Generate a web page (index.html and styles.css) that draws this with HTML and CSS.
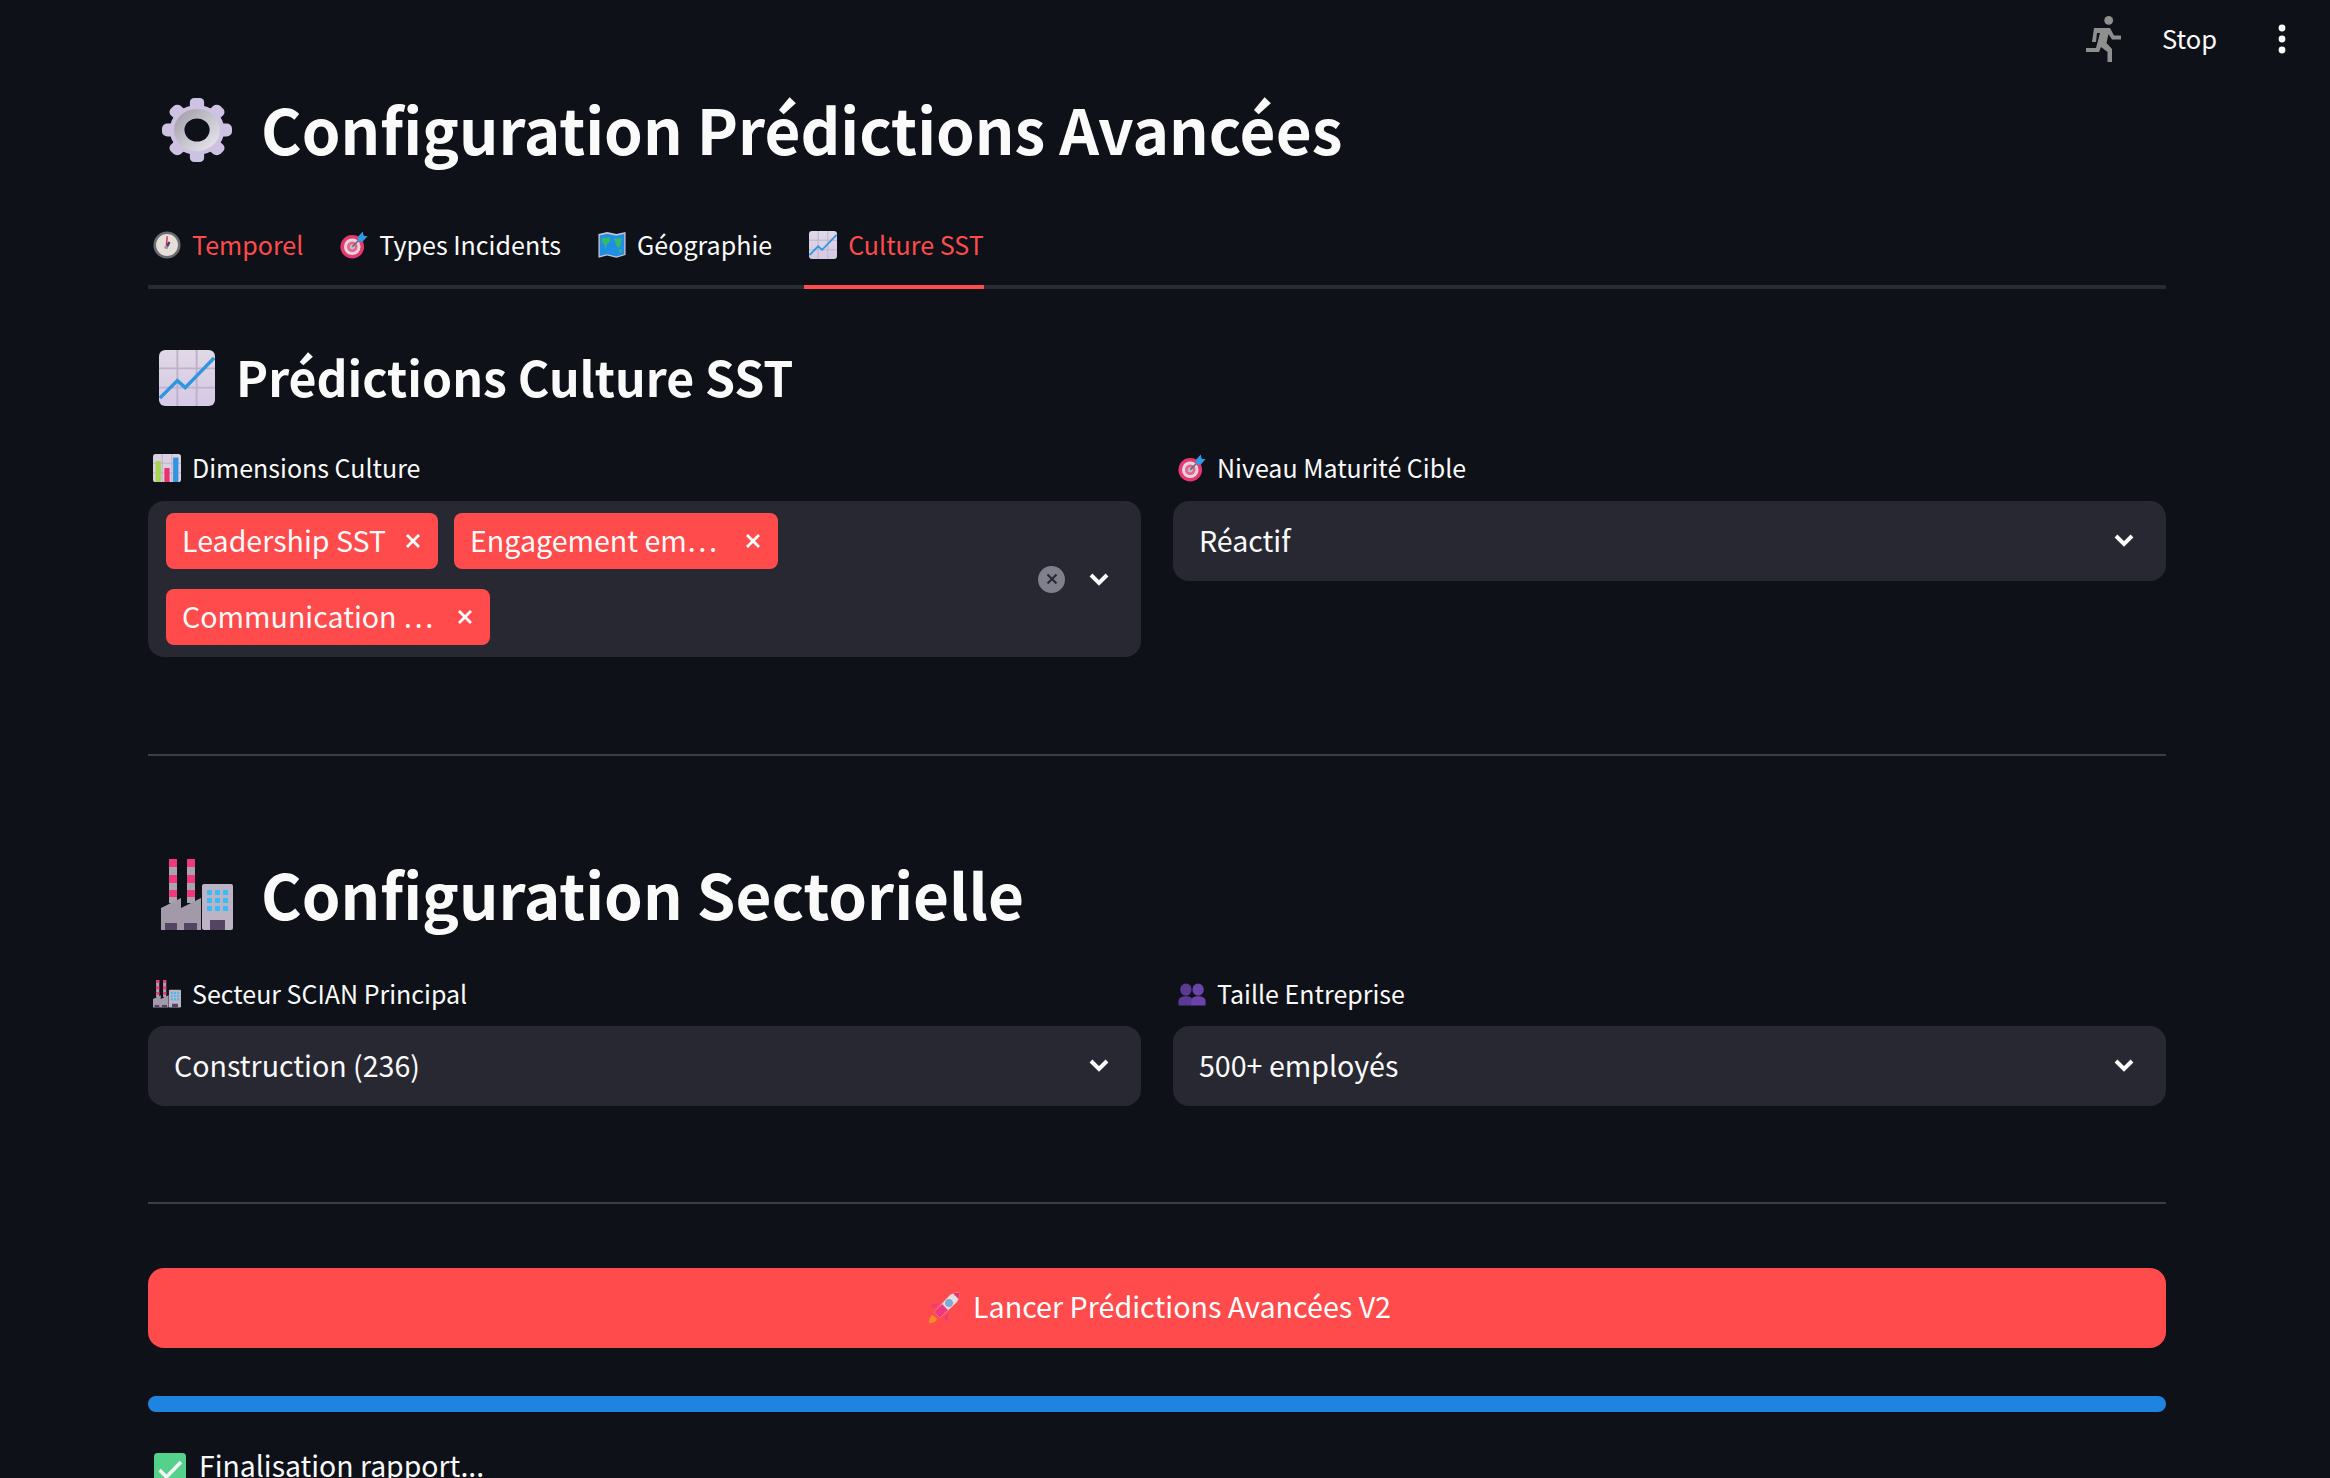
FILE: index.html
```html
<!DOCTYPE html>
<html lang="fr">

<head>
    <meta charset="UTF-8">
    <meta name="viewport" content="width=device-width, initial-scale=1.0">
    <title>Configuration Prédictions Avancées</title>
    <link rel="stylesheet" href="styles.css">
</head>

<body>
    <!-- emojis utilises partout sur la page -->
    <svg class="defs" xmlns="http://www.w3.org/2000/svg">
        <defs>
            <linearGradient id="ringGrad" x1="0" y1="0" x2="1" y2="1">
                <stop offset="0" stop-color="#a5a2ac" />
                <stop offset="1" stop-color="#e6e4ea" />
            </linearGradient>
            <linearGradient id="tileGrad" x1="0" y1="0" x2="0" y2="1">
                <stop offset="0" stop-color="#e0d9e6" />
                <stop offset="1" stop-color="#d5c9e4" />
            </linearGradient>
        </defs>
        <symbol id="e-gear" viewBox="-0.9 -4 65.8 72" preserveAspectRatio="none">
            <g fill="#cdc2e2">
                <circle cx="32" cy="32" r="25" />
                <rect x="25.5" y="0" width="13" height="64" rx="4" />
                <rect x="0" y="25.5" width="64" height="13" rx="5" />
                <rect x="25.5" y="0" width="13" height="64" rx="5" transform="rotate(45 32 32)" />
                <rect x="25.5" y="0" width="13" height="64" rx="5" transform="rotate(-45 32 32)" />
            </g>
            <circle cx="32" cy="32" r="16.5" fill="none" stroke="url(#ringGrad)" stroke-width="9" />
            <circle cx="32" cy="32" r="11.5" fill="#0e1117" />
        </symbol>
        <symbol id="e-chart" viewBox="0 0 32 32">
            <rect x="0" y="0" width="32" height="32" rx="3.5" fill="url(#tileGrad)" />
            <path d="M10.5 0V32M21.5 0V32M0 10.5H32M0 21.5H32" stroke="#bdb2c9" stroke-width="1.1" />
            <path d="M0.5 27.5L10.5 17.5L15 21.5L31.5 4.5" fill="none" stroke="#2f95e0" stroke-width="2" />
        </symbol>
        <symbol id="e-bars" viewBox="0 0 32 32">
            <rect x="0" y="0" width="32" height="32" rx="3" fill="#d9d0e2" />
            <path d="M10.5 0V32M21.5 0V32M0 10.5H32M0 21.5H32" stroke="#b8adc4" stroke-width="1" />
            <rect x="3" y="8" width="6" height="24" fill="#a5d64f" />
            <rect x="13" y="16" width="6" height="16" fill="#e8336f" />
            <rect x="23" y="4" width="6" height="28" fill="#2f95e0" />
        </symbol>
        <symbol id="e-target" viewBox="0 0 32 32">
            <circle cx="14" cy="18" r="13.5" fill="#e8386f" />
            <circle cx="14" cy="18" r="9.5" fill="#e3d5df" />
            <circle cx="14" cy="18" r="6" fill="#e8608c" />
            <circle cx="14" cy="18" r="3" fill="#c9bcc6" />
            <path d="M14 18L24 8" stroke="#6d6a78" stroke-width="2" />
            <path d="M20 7L26 0.5L27 5.5L31.5 6L25.5 12.5L21 11.5Z" fill="#2f9be6" />
        </symbol>
        <symbol id="e-map" viewBox="0 0 32 32">
            <path d="M0.5 3.5L10.5 1L21 3.5L31.5 1V27.5L21 30.5L10.5 28L0.5 30.5Z" fill="#c9c2d4" />
            <path d="M2 5L10.5 3L21 5.5L30 3V26.5L21 29L10.5 26.5L2 28.5Z" fill="#1f8fe3" />
            <path d="M5 8L13 7L14 12L10 15L9 21L7 15L4 12ZM18 9L27 8L26 15L24 20L21 17L20 13ZM24 21L27 21L27 25L24 24Z" fill="#35b96a" />
        </symbol>
        <symbol id="e-clock" viewBox="0 0 32 32">
            <circle cx="16" cy="16" r="15.5" fill="#6d6b72" />
            <circle cx="16" cy="16" r="12.5" fill="#e6dfd9" />
            <path d="M14.5 16.5L15.5 6L17 6L16.2 16.5Z" fill="#d6264f" />
            <path d="M14 19L17.5 12L20 13L16.5 20Z" fill="#4a3b6a" />
            <circle cx="15" cy="18.5" r="2" fill="#9c96a3" />
        </symbol>
        <symbol id="e-factory" viewBox="0 0 72 72">
            <rect x="8" y="0" width="8" height="44" fill="#a9a4ad" />
            <rect x="26" y="0" width="8" height="44" fill="#a9a4ad" />
            <path d="M8 0H16V8H8ZM26 0H34V8H26ZM8 16H16V24H8ZM26 16H34V24H26ZM8 31H16V38H8ZM26 31H34V38H26Z" fill="#f0387f" />
            <path d="M0 71V49L20 39V49L40 39V71Z" fill="#a39aa9" />
            <rect x="41" y="25" width="31" height="46" rx="2" fill="#bcb4c4" />
            <path d="M4 64H16V71H4ZM23 64H36V71H23ZM49 61H64V71H49Z" fill="#534462" />
            <path d="M46 31H51V36H46ZM54 31H59V36H54ZM62 31H67V36H62ZM46 39H51V44H46ZM54 39H59V44H54ZM62 39H67V44H62ZM46 47H51V52H46ZM54 47H59V52H54ZM62 47H67V52H62Z" fill="#38bdf8" />
        </symbol>
        <symbol id="e-people" viewBox="0 0 32 32">
            <g fill="#5b3a94">
                <ellipse cx="9" cy="11" rx="6.5" ry="7" />
                <path d="M0.5 29V24C0.5 20.5 4 18.5 9 18.5C14 18.5 17 20.5 17 24V29Z" />
            </g>
            <g fill="#6a44a8">
                <ellipse cx="23" cy="11" rx="6.5" ry="7" />
                <path d="M15 29V24C15 20.5 18 18.5 23 18.5C28 18.5 31.5 20.5 31.5 24V29Z" />
            </g>
        </symbol>
        <symbol id="e-rocket" viewBox="0 0 32 32">
            <path d="M1 31C1 27 2 24 5 23L9 27C8 30 5 31 1 31Z" fill="#f28c28" />
            <path d="M6 16L2 13L12 11ZM16 26L19 30L21 20Z" fill="#f0387f" />
            <path d="M6 20L22 3C25 1 29 0 31 1C32 3 31 7 29 10L12 26Z" fill="#e4dee6" />
            <path d="M6 20L14 12L20 18L12 26Z" fill="#f0387f" />
            <path d="M25 1.5C27.5 0.5 30 0.5 31 1C31.5 2 31.5 4.5 30.5 7Z" fill="#e8336f" />
            <circle cx="21" cy="11" r="3.5" fill="#6fb1ee" stroke="#9d97a6" stroke-width="1" />
        </symbol>
        <symbol id="e-check" viewBox="0 0 32 32">
            <rect x="0" y="0" width="32" height="32" rx="3.5" fill="#54d18a" />
            <path d="M5.5 17L12.5 24L27 9" fill="none" stroke="#f5f5f5" stroke-width="3.6" />
        </symbol>
        <symbol id="i-x" viewBox="0 0 16 16">
            <path d="M2 2L14 14M14 2L2 14" stroke="currentColor" stroke-width="2.8" fill="none" />
        </symbol>
        <symbol id="i-chevron" viewBox="0 0 20 14">
            <path d="M2 3L10 11L18 3" stroke="currentColor" stroke-width="4" fill="none" />
        </symbol>
    </svg>

    <div class="app">
        <div class="toolbar">
            <svg class="run-icon" viewBox="0 0 35 46">
                <circle cx="22.7" cy="4.4" r="4.4" fill="#8f8f8f" />
                <path d="M8 12H24L28 19.5H35V23.5H26L22.5 18L20.5 27L26 33V46H21.5V36L15 31L13 36H0V32H10L14 17H11L10 26H6Z" fill="#8f8f8f" />
            </svg>
            <span class="stop">Stop</span>
            <svg class="dots" viewBox="0 0 10 30">
                <circle cx="5" cy="4" r="3.4" />
                <circle cx="5" cy="15" r="3.4" />
                <circle cx="5" cy="26" r="3.4" />
            </svg>
        </div>

        <h1 class="title">
            <svg class="emoji-h1"><use href="#e-gear" /></svg>
            <span>Configuration Prédictions Avancées</span>
        </h1>

        <div class="tabs">
            <div class="tab tab-red"><svg class="emoji-sm"><use href="#e-clock" /></svg>Temporel</div>
            <div class="tab"><svg class="emoji-sm"><use href="#e-target" /></svg>Types Incidents</div>
            <div class="tab"><svg class="emoji-sm"><use href="#e-map" /></svg>Géographie</div>
            <div class="tab tab-red tab-active"><svg class="emoji-sm"><use href="#e-chart" /></svg>Culture SST</div>
        </div>

        <h2 class="subtitle">
            <svg class="emoji-h2"><use href="#e-chart" /></svg>
            <span>Prédictions Culture SST</span>
        </h2>

        <div class="columns columns-first">
            <div class="field">
                <label class="field-label"><svg class="emoji-sm"><use href="#e-bars" /></svg>Dimensions Culture</label>
                <div class="multi">
                    <div class="chips">
                        <span class="chip chip-1">Leadership SST<svg class="chip-x"><use href="#i-x" /></svg></span>
                        <span class="chip chip-2">Engagement em…<svg class="chip-x"><use href="#i-x" /></svg></span>
                        <span class="chip chip-3">Communication …<svg class="chip-x"><use href="#i-x" /></svg></span>
                    </div>
                    <span class="clear"><svg><use href="#i-x" /></svg></span>
                    <svg class="chevron"><use href="#i-chevron" /></svg>
                </div>
            </div>
            <div class="field">
                <label class="field-label"><svg class="emoji-sm"><use href="#e-target" /></svg>Niveau Maturité Cible</label>
                <div class="select">Réactif<svg class="chevron"><use href="#i-chevron" /></svg></div>
            </div>
        </div>

        <hr class="rule rule-first">

        <h1 class="title title-second">
            <svg class="emoji-h1"><use href="#e-factory" /></svg>
            <span>Configuration Sectorielle</span>
        </h1>

        <div class="columns columns-second">
            <div class="field">
                <label class="field-label"><svg class="emoji-sm"><use href="#e-factory" /></svg>Secteur SCIAN Principal</label>
                <div class="select">Construction (236)<svg class="chevron"><use href="#i-chevron" /></svg></div>
            </div>
            <div class="field">
                <label class="field-label"><svg class="emoji-sm"><use href="#e-people" /></svg>Taille Entreprise</label>
                <div class="select">500+ employés<svg class="chevron"><use href="#i-chevron" /></svg></div>
            </div>
        </div>

        <hr class="rule rule-second">

        <button class="launch"><svg class="emoji-btn"><use href="#e-rocket" /></svg>Lancer Prédictions Avancées V2</button>

        <div class="progress"></div>

        <div class="status"><svg class="emoji-status"><use href="#e-check" /></svg>Finalisation rapport...</div>
    </div>
</body>

</html>
```

FILE: styles.css
```css
html,
body {
    margin: 0;
    padding: 0;
    height: 100vh;
    overflow: hidden;
    background-color: #0e1117;
}

body {
    color: #fafafa;
    font-family: "Noto Sans CJK SC", "Noto Sans", sans-serif;
}

.defs {
    display: block;
    width: 0;
    height: 0;
}

.app {
    padding: 0 164px 0 148px;
}

/* barre du haut */
.toolbar {
    height: 78px;
    margin-right: -164px;
    display: flex;
    align-items: center;
    justify-content: flex-end;
    padding-right: 43px;
}

.run-icon {
    width: 35px;
    height: 46px;
}

.stop {
    font-size: 25.5px;
    margin-left: 41px;
    padding-bottom: 2px;
    line-height: 36px;
}

.dots {
    width: 10px;
    height: 30px;
    fill: #fafafa;
    margin-left: 60px;
}

/* titres */
.title {
    height: 104px;
    margin: 0;
    padding-left: 13px;
    padding-bottom: 4px;
    box-sizing: border-box;
    display: flex;
    align-items: center;
    gap: 28px;
    font-size: 62px;
    font-weight: 600;
}

.title-second {
    margin-top: 87px;
}

.emoji-h1 {
    width: 72px;
    height: 72px;
    margin-top: 4px;
}

.subtitle {
    height: 80px;
    margin: 49px 0 0;
    padding-left: 11px;
    padding-bottom: 4px;
    box-sizing: border-box;
    display: flex;
    align-items: center;
    gap: 21px;
    font-size: 48.2px;
    font-weight: 600;
}

.emoji-h2 {
    width: 56px;
    height: 56px;
    margin-top: 4px;
}

/* onglets */
.tabs {
    margin-top: 23px;
    height: 80px;
    display: flex;
    gap: 32px;
    border-bottom: 4px solid #292a33;
}

.tab {
    height: 84px;
    box-sizing: border-box;
    display: flex;
    align-items: center;
    padding-bottom: 7px;
    font-size: 25.05px;
}

.tab-red {
    color: #ff4b4b;
}

.tab-active {
    border-bottom: 4px solid #ff4b4b;
    padding-bottom: 3px;
}

.emoji-sm {
    width: 28px;
    height: 28px;
    margin: 2px 11px 0 5px;
    flex-shrink: 0;
}

/* champs */
.columns {
    display: grid;
    grid-template-columns: 1fr 1fr;
    gap: 32px;
}

.columns-first {
    margin-top: 30px;
}

.columns-second {
    margin-top: 27px;
}

.columns-second .field-label {
    margin-bottom: 12px;
}

.field-label {
    height: 40px;
    margin-bottom: 13px;
    padding-bottom: 2px;
    box-sizing: border-box;
    display: flex;
    align-items: center;
    font-size: 25px;
}

.select {
    height: 80px;
    box-sizing: border-box;
    padding: 0 32px 3px 26px;
    border-radius: 16px;
    background-color: #282832;
    display: flex;
    align-items: center;
    justify-content: space-between;
    font-size: 28.6px;
}

.chevron {
    width: 20px;
    height: 14px;
    color: #fafafa;
    flex-shrink: 0;
}

.select .chevron {
    margin-top: 1px;
}

.multi {
    height: 156px;
    box-sizing: border-box;
    padding: 12px 32px 12px 18px;
    border-radius: 16px;
    background-color: #282832;
    display: flex;
    align-items: center;
}

.chips {
    flex: 1;
    display: flex;
    flex-wrap: wrap;
    gap: 20px 16px;
    align-self: flex-start;
}

.chip {
    height: 56px;
    box-sizing: border-box;
    padding: 0 17px 3px 16px;
    border-radius: 8px;
    background-color: #ff4b4b;
    display: flex;
    align-items: center;
    justify-content: space-between;
    font-size: 28.6px;
    white-space: nowrap;
}

.chip-1 {
    width: 272px;
}

.chip-2 {
    width: 324px;
}

.chip-3 {
    width: 324px;
}

.chip-x {
    width: 16px;
    height: 16px;
    margin-top: 3px;
    color: #fff;
    flex-shrink: 0;
}

.clear {
    width: 27px;
    height: 27px;
    margin-right: 24px;
    border-radius: 50%;
    background-color: #7f808c;
    color: #282832;
    display: flex;
    align-items: center;
    justify-content: center;
}

.clear svg {
    width: 12px;
    height: 12px;
}

.rule {
    height: 2px;
    margin: 0;
    border: 0;
    background-color: #3c3e45;
}

.rule-first {
    margin-top: 97px;
}

.rule-second {
    margin-top: 96px;
}

/* bouton et progression */
.launch {
    width: 100%;
    height: 80px;
    margin-top: 64px;
    padding: 0 0 5px 5px;
    border: 0;
    border-radius: 16px;
    background-color: #ff4b4b;
    color: #fff;
    font-family: inherit;
    font-size: 28.7px;
    display: flex;
    align-items: center;
    justify-content: center;
}

.emoji-btn {
    width: 32px;
    height: 32px;
    margin-right: 13px;
    margin-top: 5px;
}

.progress {
    height: 16px;
    margin-top: 48px;
    border-radius: 8px;
    background-color: #1f83e0;
}

/* le texte descend sous le bas de la fenetre, comme sur la capture */
.status {
    height: 40px;
    margin-top: 37px;
    padding: 0 0 10px 6px;
    box-sizing: border-box;
    display: flex;
    align-items: center;
    font-size: 28.4px;
}

.emoji-status {
    width: 32px;
    height: 32px;
    margin-right: 13px;
    margin-top: 10px;
    flex-shrink: 0;
}
```
